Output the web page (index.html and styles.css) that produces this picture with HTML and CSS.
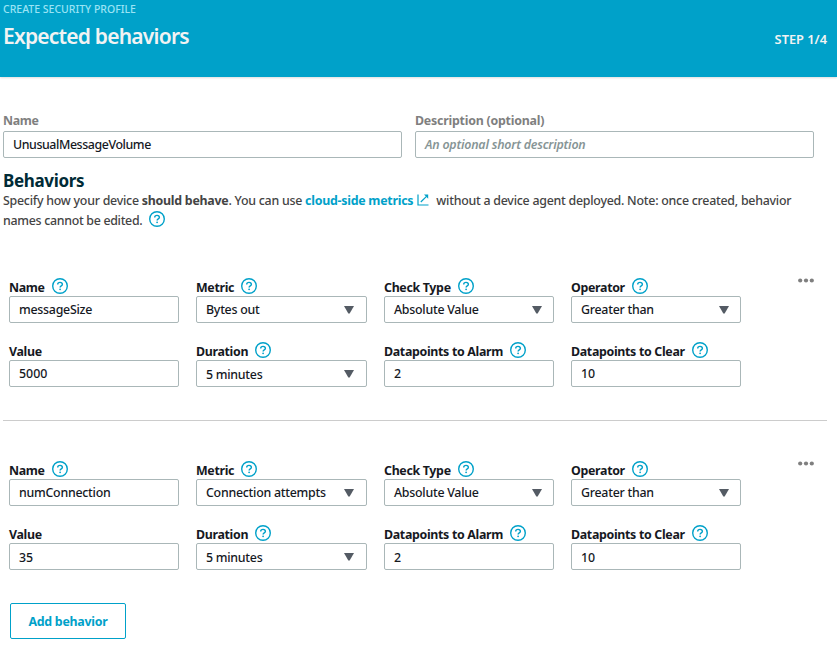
FILE: index.html
```html
<!DOCTYPE html>
<html lang="en">
<head>
<meta charset="utf-8">
<title>Create security profile</title>
<link rel="stylesheet" href="styles.css">
</head>
<body>
<svg width="0" height="0" class="defs" aria-hidden="true">
  <symbol id="help" viewBox="0 0 16 16"><circle cx="8" cy="8" r="7.3" fill="none" stroke="#00a1c9" stroke-width="1.4"/><path d="M5.7 6.5C5.7 3.7 10.4 3.7 10.4 6.3C10.4 8 8.1 7.8 8.1 9.6" fill="none" stroke="#00a1c9" stroke-width="1.4"/><circle cx="8.1" cy="11.3" r=".9" fill="#00a1c9"/></symbol>
  <symbol id="caret" viewBox="0 0 10 8"><path d="M0 0H10L5.8 7.3Q5 8.2 4.2 7.3Z" fill="#545b64"/></symbol>
  <symbol id="dots" viewBox="0 0 16 5"><circle cx="2.2" cy="2.5" r="2.1"/><circle cx="8" cy="2.5" r="2.1"/><circle cx="13.8" cy="2.5" r="2.1"/></symbol>
</svg>
<header class="banner">
  <div class="crumb">CREATE SECURITY PROFILE</div>
  <div class="banner-row"><h1>Expected behaviors</h1><span class="step">STEP 1/4</span></div>
</header>
<main>
  <section class="profile">
    <div class="field"><div class="label muted">Name</div><div class="box tight">UnusualMessageVolume</div></div>
    <div class="field"><div class="label muted desc">Description (optional)</div><div class="box placeholder">An optional short description</div></div>
  </section>
  <h2>Behaviors</h2>
  <p class="intro"><span>Specify how your device <b>should behave</b>. You can use </span><a>cloud-side metrics<svg class="ext" viewBox="0 0 12 12"><path d="M1 .5V11H11.5M3.8 8L9.5 2.3" fill="none" stroke="currentColor" stroke-width="1.2"/><path d="M7 .6H11.2V4.8Z" fill="currentColor"/></svg></a><span>without a device agent deployed. Note: once created, behavior</span><br><span class="last">names cannot be edited.</span><svg class="help"><use href="#help"/></svg></p>
  <section class="behavior">
    <div class="grid">
      <div class="field"><div class="label">Name<svg class="help"><use href="#help"/></svg></div><div class="box">messageSize</div></div>
      <div class="field"><div class="label">Metric<svg class="help"><use href="#help"/></svg></div><div class="box wide">Bytes out<svg class="caret"><use href="#caret"/></svg></div></div>
      <div class="field"><div class="label">Check Type<svg class="help"><use href="#help"/></svg></div><div class="box">Absolute Value<svg class="caret"><use href="#caret"/></svg></div></div>
      <div class="field"><div class="label">Operator<svg class="help"><use href="#help"/></svg></div><div class="box">Greater than<svg class="caret"><use href="#caret"/></svg></div></div>
      <div class="field"><div class="label">Value</div><div class="box num">5000</div></div>
      <div class="field"><div class="label">Duration<svg class="help"><use href="#help"/></svg></div><div class="box wide low">5 minutes<svg class="caret"><use href="#caret"/></svg></div></div>
      <div class="field"><div class="label">Datapoints to Alarm<svg class="help"><use href="#help"/></svg></div><div class="box num">2</div></div>
      <div class="field"><div class="label">Datapoints to Clear<svg class="help"><use href="#help"/></svg></div><div class="box num">10</div></div>
    </div>
    <svg class="dots"><use href="#dots"/></svg>
  </section>
  <section class="behavior second">
    <div class="grid">
      <div class="field"><div class="label">Name<svg class="help"><use href="#help"/></svg></div><div class="box">numConnection</div></div>
      <div class="field"><div class="label">Metric<svg class="help"><use href="#help"/></svg></div><div class="box wide">Connection attempts<svg class="caret"><use href="#caret"/></svg></div></div>
      <div class="field"><div class="label">Check Type<svg class="help"><use href="#help"/></svg></div><div class="box">Absolute Value<svg class="caret"><use href="#caret"/></svg></div></div>
      <div class="field"><div class="label">Operator<svg class="help"><use href="#help"/></svg></div><div class="box">Greater than<svg class="caret"><use href="#caret"/></svg></div></div>
      <div class="field"><div class="label">Value</div><div class="box low num">35</div></div>
      <div class="field"><div class="label">Duration<svg class="help"><use href="#help"/></svg></div><div class="box wide low">5 minutes<svg class="caret"><use href="#caret"/></svg></div></div>
      <div class="field"><div class="label">Datapoints to Alarm<svg class="help"><use href="#help"/></svg></div><div class="box low num">2</div></div>
      <div class="field"><div class="label">Datapoints to Clear<svg class="help"><use href="#help"/></svg></div><div class="box low num">10</div></div>
    </div>
    <svg class="dots"><use href="#dots"/></svg>
  </section>
  <button class="add">Add behavior</button>
</main>
</body>
</html>
```
FILE: styles.css
```css
* { box-sizing: border-box; }
body { margin: 0; height: 647px; overflow: hidden; background: #fff; color: #16191f; font: 500 12.4px/20px "Noto Sans", "Open Sans", sans-serif; }
.defs { position: absolute; }
.banner { height: 77px; background: #00a1c9; padding: 0 10px 0 3px; box-shadow: 0 1px 2px #0002; color: #f2f3f3; }
.crumb { height: 18px; font-size: 10.5px; line-height: 18px; color: #9be4f5; font-weight: 500; }
.banner-row { display: flex; justify-content: space-between; align-items: flex-start; height: 38px; }
h1 { margin: 0; font-size: 21px; font-weight: 600; line-height: 36px; letter-spacing: -0.78px; }
.step { font-size: 12.8px; line-height: 20px; padding-top: 11px; font-weight: 600; }
main { padding: 34px 10px 0 3px; }
.profile { display: grid; grid-template-columns: 399px 399px; column-gap: 13px; }
.label { display: flex; align-items: center; height: 20px; padding-top: 3px; font-weight: 700; font-size: 12.4px; letter-spacing: -0.32px; white-space: nowrap; }
.label .help { margin: -3px 0 0 7px; }
.label.muted { color: #7f7f7f; padding-top: 0; }
.label.desc { letter-spacing: -0.23px; }
.box { display: flex; align-items: center; justify-content: space-between; height: 27px; padding: 0 11px 0 9px; border: 1px solid #aab7b8; border-radius: 2px; letter-spacing: -0.26px; white-space: nowrap; }
.box.wide { padding-right: 12px; }
.box.low { padding-top: 2px; }
.box.low .caret { margin-top: -2px; }
.box.tight { letter-spacing: -0.42px; }
.box.num { letter-spacing: 0; }
.box.placeholder { font-style: italic; font-weight: 600; color: #879596; letter-spacing: -0.21px; }
.help { width: 16px; height: 16px; flex: none; }
.caret { width: 10px; height: 8px; flex: none; }
h2 { margin: 13px 0 0; font-size: 17px; line-height: 20px; font-weight: 700; letter-spacing: -0.35px; color: #002b36; }
.intro { margin: 0; height: 40px; line-height: 20px; letter-spacing: -0.25px; color: #444; white-space: nowrap; }
.intro a { color: #00a1c9; font-weight: 700; }
.intro .last { letter-spacing: -0.3px; }
.ext { width: 12px; height: 12px; margin: 0 7px 0 4px; vertical-align: -1px; }
.intro .help { margin-left: 7px; vertical-align: -2px; }
.behavior { display: flex; justify-content: space-between; margin-top: 45px; padding: 0 13px 33px 6px; border-bottom: 1px solid #ccc; }
.grid { display: grid; grid-template-columns: 170px 171px 170px 170px; column-gap: 17px; row-gap: 17px; }
.dots { width: 16px; height: 5px; margin-top: 2px; fill: #7f7f7f; }
.behavior.second { margin-top: 38px; border-bottom: 0; }
.add { display: block; margin-left: 7px; width: 116px; height: 36px; padding: 2px 0 0; border: 1px solid #00a1c9; border-radius: 2px; background: #fff; color: #00a1c9; font: 700 12.4px/20px "Noto Sans", sans-serif; letter-spacing: -0.26px; }
```
